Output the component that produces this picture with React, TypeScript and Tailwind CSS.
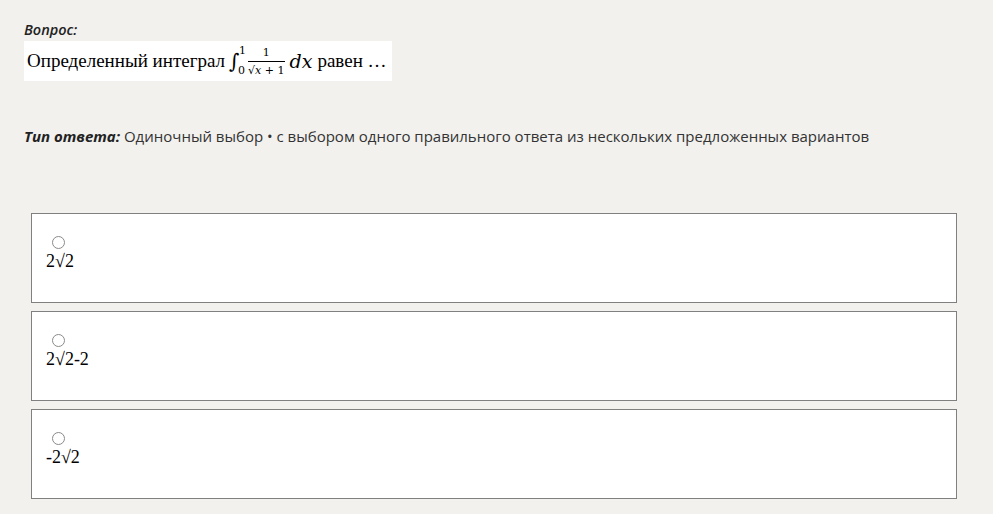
import React from 'react';

const options = ['2√2', '2√2-2', '-2√2'];

const serif = { fontFamily: '"Liberation Serif", "Times New Roman", serif' };
const math = { fontFamily: '"DejaVu Serif", "Liberation Serif", serif' };

const Formula: React.FC = () => (
  <div className="flex items-center bg-white h-[40px] w-[368px] pl-[3px] text-[19px] text-black" style={serif}>
    <span>Определенный интеграл</span>
    <span className="relative ml-[4px] inline-flex items-center h-[30px] w-[16px]">
      <span className="text-[20px] leading-none italic" style={math}>∫</span>
      <span className="absolute left-[10px] top-[-1px] text-[11px] leading-none" style={math}>1</span>
      <span className="absolute left-[9px] top-[19px] text-[11px] leading-none" style={math}>0</span>
    </span>
    <span className="ml-[3px] inline-flex flex-col items-center text-[11px] leading-none" style={math}>
      <span className="pb-[3px]">1</span>
      <span className="border-t border-black pt-[3px] whitespace-pre">√<span className="italic">x</span> + 1</span>
    </span>
    <span className="ml-[5px] italic" style={math}>dx</span>
    <span className="ml-[5px]">равен …</span>
  </div>
);

export default function App() {
  return (
    <div className="min-h-screen bg-[#f2f1ee] px-[24px] pt-[19px] pb-[16px]" style={{ fontFamily: '"Open Sans", "Noto Sans", sans-serif' }}>
      <div className="text-[14.5px] leading-[22px] font-semibold italic text-[#222]">Вопрос:</div>
      <Formula />
      <div className="mt-[44px] text-[15px] leading-[22px] text-[#333]">
        <span className="font-bold italic text-[#222]">Тип ответа:</span> Одиночный выбор • с выбором одного правильного ответа из нескольких предложенных вариантов
      </div>
      <div className="mt-[66px] ml-[7px] w-[926px] flex flex-col gap-[8px]">
        {options.map((opt) => (
          <div key={opt} className="h-[90px] bg-white border border-[#808080] pl-[14px] pt-[22px]">
            <span className="ml-[6px] block h-[13px] w-[13px] rounded-full border border-[#8a8a8a] bg-white" />
            <div className="mt-[1px] text-[18px] leading-[22px] text-black" style={serif}>{opt}</div>
          </div>
        ))}
      </div>
    </div>
  );
}
